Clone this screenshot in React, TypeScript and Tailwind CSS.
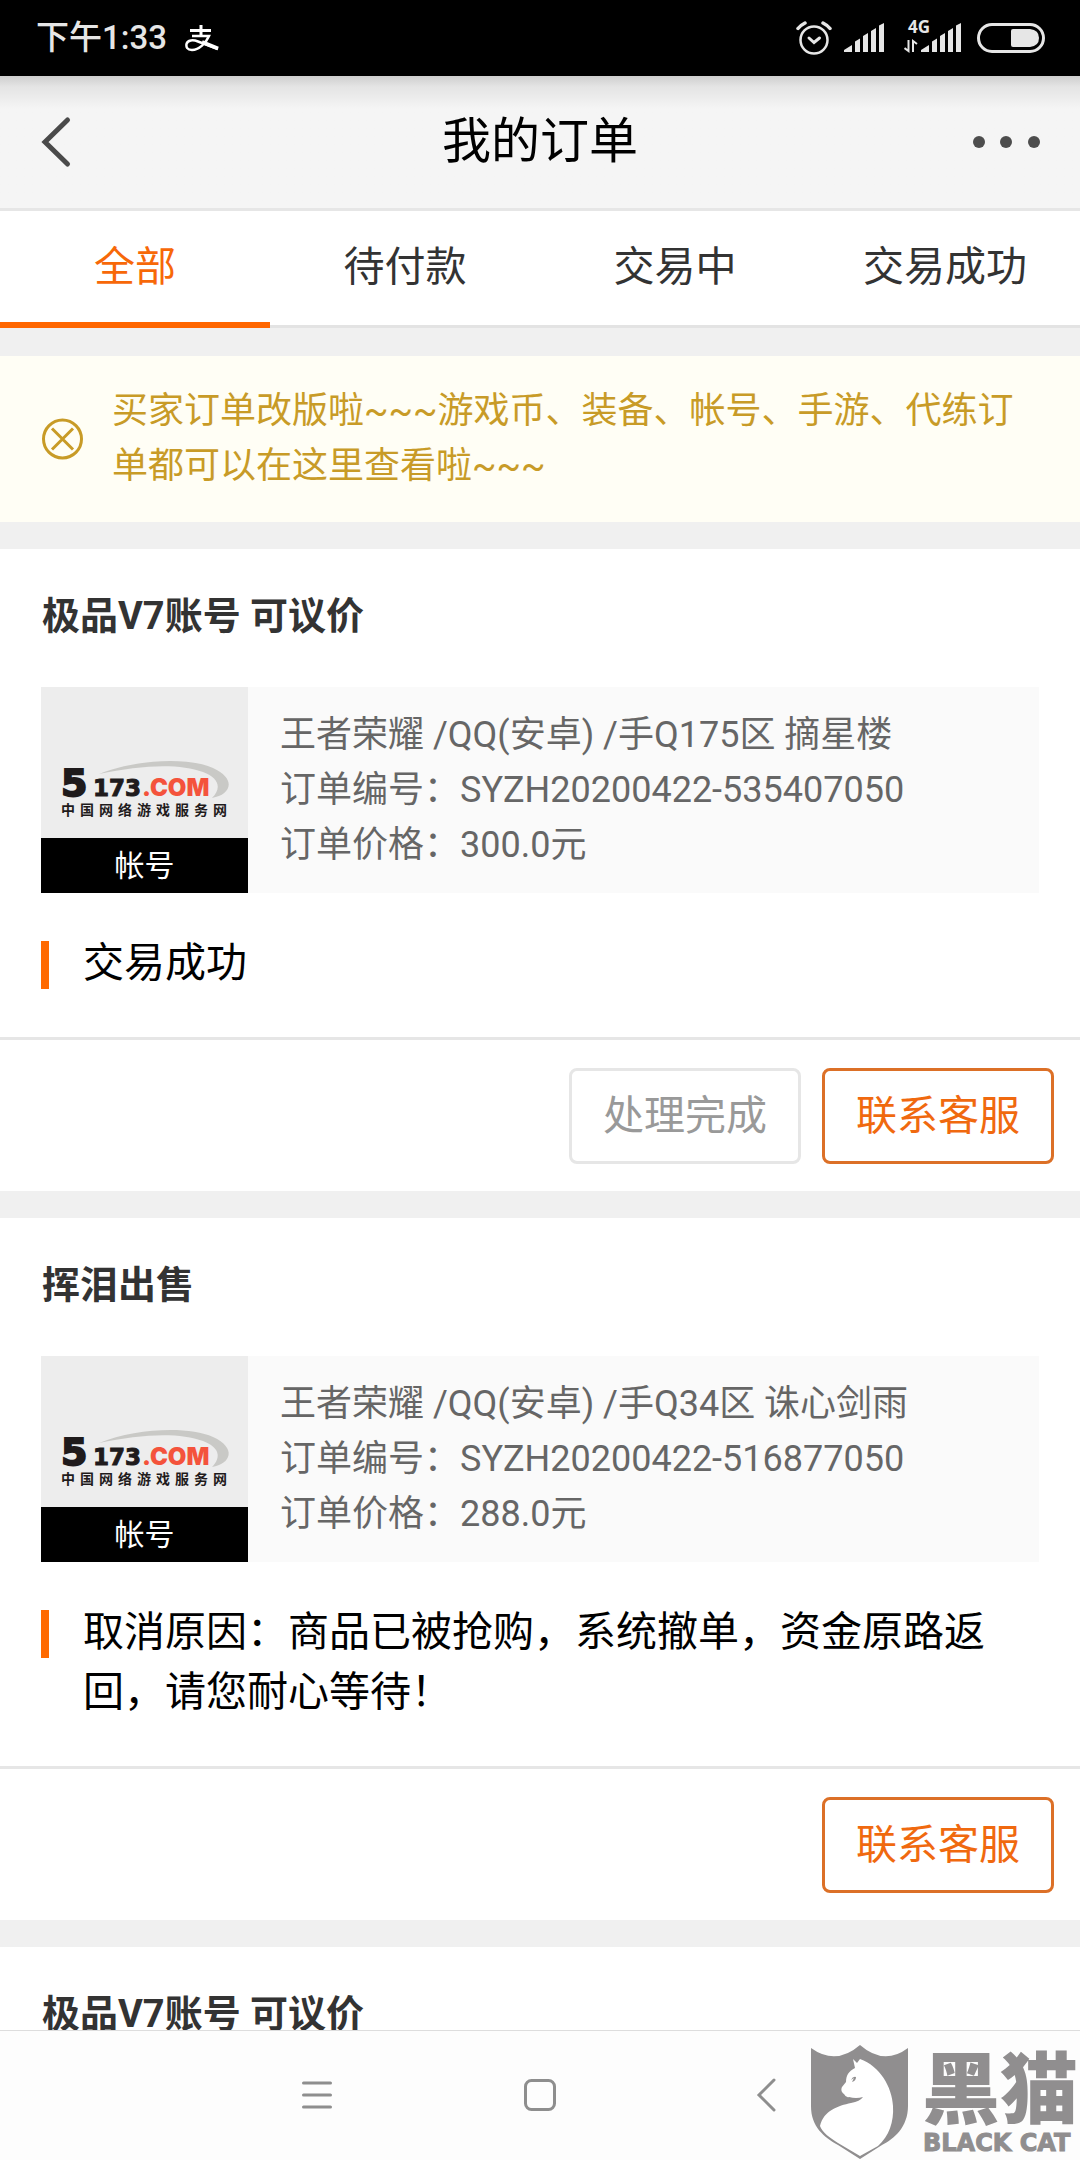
import { useState } from "react";

interface Order {
  id: string;
  title: string;
  area?: string;
  orderNo?: string;
  price?: string;
  status?: string;
  finished?: boolean;
}

const TABS = ["全部", "待付款", "交易中", "交易成功"];

const ORDERS: Order[] = [
  {
    id: "535407050",
    title: "极品V7账号 可议价",
    area: "王者荣耀 /QQ(安卓) /手Q175区 摘星楼",
    orderNo: "SYZH20200422-535407050",
    price: "300.0元",
    status: "交易成功",
    finished: true,
  },
  {
    id: "516877050",
    title: "挥泪出售",
    area: "王者荣耀 /QQ(安卓) /手Q34区 诛心剑雨",
    orderNo: "SYZH20200422-516877050",
    price: "288.0元",
    status: "取消原因：商品已被抢购，系统撤单，资金原路返回，请您耐心等待！",
  },
  { id: "next", title: "极品V7账号 可议价" },
];

// ── Status bar ───────────────────────────────────────────────────────────────

function SignalBars() {
  return (
    <path
      d="M0 32V30L8 25V32ZM11 32V21.500L16 18.500V32ZM19 32V16L24 13V32ZM27 32V11L32 8V32ZM35 32V5.500L40 3V32Z"
      fill="#e6e6e6"
    />
  );
}

function StatusBar() {
  return (
    <div className="flex h-[76px] shrink-0 items-center bg-black pr-[35px] pl-9 text-[#e6e6e6]">
      <span className="text-[33px] leading-10 font-medium">下午1:33</span>
      <svg className="ml-[18px]" width="34" height="28" viewBox="0 0 34 28" fill="none" stroke="#fff">
        <path d="M5 6.500H26M16 1V12" strokeWidth="3" />
        <path d="M7 12H24C21 19 14 26 7 26C2 26 1 23 1.500 20C2.500 16 8 15.500 13 17.500L33 25" strokeWidth="2.500" />
        <path d="M17 18L33 24.500" strokeWidth="4" />
      </svg>
      <div className="ml-auto flex items-center">
        <svg width="36" height="36" viewBox="0 0 36 36" fill="none" stroke="#e6e6e6" strokeWidth="2.500" strokeLinecap="round">
          <circle cx="18" cy="20" r="13.500" />
          <path d="M13 18L18 22.500L23.500 18" strokeWidth="3" />
          <path d="M2 8.500C4 6 6 4.500 9 3M27 3C30 4.500 32 6 34 8.500" strokeWidth="3.500" />
        </svg>
        <svg className="ml-3" width="40" height="36" viewBox="0 0 40 36">
          <SignalBars />
        </svg>
        <svg className="ml-5" width="57" height="52" viewBox="0 -8 57 52">
          <text x="4" y="13" fontSize="17" fontWeight="700" fill="#e6e6e6" fontFamily="Noto Sans">
            4G
          </text>
          <path d="M4.500 20V31L0.500 28M9 32V21L13 24" fill="none" stroke="#e6e6e6" strokeWidth="2" />
          <g transform="translate(17 0)">
            <SignalBars />
          </g>
        </svg>
        <svg className="ml-4" width="68" height="36" viewBox="0 0 68 36">
          <rect x="1.500" y="4.500" width="65" height="27" rx="13.500" fill="none" stroke="#e6e6e6" strokeWidth="3" />
          <path d="M34 11Q34 9 36 9H53Q62 10 62 18Q62 26 53 27H36Q34 27 34 25Z" fill="#e6e6e6" />
        </svg>
      </div>
    </div>
  );
}

// ── Page header and tabs ─────────────────────────────────────────────────────

function Header() {
  return (
    <header className="grid h-[135px] shrink-0 grid-cols-3 items-center border-b-[3px] border-[#e6e6e6] bg-[#f5f5f5] bg-linear-to-b from-[#cecece] via-[#e4e4e4] via-8% to-[#f5f5f5] to-25% px-10">
      <button type="button" aria-label="返回" className="justify-self-start">
        <svg width="32" height="52" viewBox="0 0 32 52" fill="none" stroke="#4a4a4a" strokeWidth="5" strokeLinecap="round">
          <path d="M27.500 4L5 26L27.500 48" />
        </svg>
      </button>
      <h1 className="text-center text-[49px] leading-[60px] text-black">我的订单</h1>
      <button type="button" aria-label="更多" className="justify-self-end">
        <svg width="68" height="52" viewBox="0 0 68 52" fill="#4d4d4d">
          <circle cx="7" cy="26" r="6" />
          <circle cx="34" cy="26" r="6" />
          <circle cx="62" cy="26" r="6" />
        </svg>
      </button>
    </header>
  );
}

function Tabs() {
  const [active, setActive] = useState(TABS[0]);

  return (
    <nav className="grid grid-cols-4 bg-white">
      {TABS.map((tab) => (
        <button
          key={tab}
          type="button"
          onClick={() => setActive(tab)}
          className={`h-[117px] text-[41px] leading-[60px] ${
            tab === active
              ? "border-b-[6px] border-[#ff6600] text-[#f76808]"
              : "border-b-[3px] border-[#e3e3e3] pb-[3px] text-[#333]"
          }`}
        >
          {tab}
        </button>
      ))}
    </nav>
  );
}

function Notice() {
  return (
    <div className="mt-7 flex items-center bg-[#fffef5] py-7 pr-10 pl-[41px] text-[#c89b27]">
      <svg className="shrink-0" width="43" height="43" viewBox="0 0 43 43" fill="none" stroke="currentColor" strokeWidth="3">
        <circle cx="21.500" cy="21" r="19" />
        <path d="M11 10.500L32 31.500M32 10.500L11 31.500" />
      </svg>
      <p className="ml-7 text-[36px] leading-[55px]">
        买家订单改版啦~~~游戏币、装备、帐号、手游、代练订单都可以在这里查看啦~~~
      </p>
    </div>
  );
}

// ── Orders ───────────────────────────────────────────────────────────────────

function Thumbnail() {
  return (
    <div className="w-[207px] shrink-0 bg-[#ededed]">
      <svg width="207" height="151" viewBox="0 0 207 151" fontFamily="DejaVu Sans" fontWeight="700">
        <path
          d="M58 87C95 72 148 70 172 81C196 92 190 108 171 111C181 101 178 91 162 85C138 76 100 78 58 87Z"
          fill="#c9c9c6"
        />
        <text x="20" y="109" fontSize="38" fill="#1f1b1c" stroke="#1f1b1c" strokeWidth="2">5</text>
        <text x="52" y="109" fontSize="23" fill="#1f1b1c" stroke="#1f1b1c" strokeWidth="1">173</text>
        <text x="101" y="109" fontSize="24" fontWeight="900" fontFamily="Inter" fill="#f4533c">.COM</text>
        <text
          x="20 39 58 77 96 115 134 153 172"
          y="128"
          fontSize="14"
          fontFamily="Noto Sans CJK SC"
          fill="#1f1b1c"
        >
          中国网络游戏服务网
        </text>
      </svg>
      <div className="bg-black text-center text-[30px] leading-[55px] text-white">帐号</div>
    </div>
  );
}

function OrderCard({ order }: { order: Order }) {
  return (
    <section className="mt-[27px] bg-white">
      <h2 className="px-[42px] pt-10 text-[38px] leading-[55px] font-bold text-[#333]">
        {order.title}
      </h2>
      {order.orderNo && (
        <>
          <div className="mx-[41px] mt-[43px] flex bg-[#fafafa]">
            <Thumbnail />
            <div className="self-center pl-8 text-[36px] leading-[55px] text-[#666]">
              <p>{order.area}</p>
              <p>订单编号：{order.orderNo}</p>
              <p>订单价格：{order.price}</p>
            </div>
          </div>
          <div className="flex items-start px-[41px] pt-10 pb-11">
            <span className="mt-2 h-12 w-2 shrink-0 bg-[#ff6a00]" />
            <p className="ml-[34px] text-[41px] leading-[60px] text-black">{order.status}</p>
          </div>
          {/* Actions */}
          <div className="flex justify-end gap-[21px] border-t-[3px] border-[#e6e6e6] pt-7 pr-[26px] pb-[27px]">
            {order.finished && (
              <button
                type="button"
                className="h-24 w-[232px] rounded-lg border-[3px] border-[#e6e6e6] text-[41px] leading-[60px] text-[#999]"
              >
                处理完成
              </button>
            )}
            <button
              type="button"
              className="h-24 w-[232px] rounded-lg border-[3px] border-[#dc7027] text-[41px] leading-[60px] text-[#f0690f]"
            >
              联系客服
            </button>
          </div>
        </>
      )}
    </section>
  );
}

// ── System navigation ────────────────────────────────────────────────────────

function BlackCat() {
  return (
    <svg className="absolute right-0 bottom-0" width="270" height="136" viewBox="0 -20 270 136" fill="#908e8f">
      <path d="M1 4Q26 22 50 1Q74 22 98 4V62C98 83 84 95 72 101L50 115L28 101C14 93 1 83 1 62Z" />
      <path
        d="M43 15L47 19L50 15C70 22 82 43 83 62C84 78 79 92 68 102L50 112L28 99C20 94 12 88 10 82C14 66 28 62 41 59C47 58 51 56 53 53Q46 55 39 53Q36 54 34 50C31 48 31 45 32 43L36 38C36 31 39 27 45 24Z"
        fill="#fff"
      />
      <path d="M41 36Q43 32 46 33Q46 37 42 38L44 34Z" />
      <text x="112" y="74" fontSize="78" fontWeight="900" fontFamily="Noto Sans CJK SC">
        黑猫
      </text>
      <text x="113" y="107" fontSize="24" fontWeight="700" fontFamily="DejaVu Sans" stroke="#908e8f">
        BLACK CAT
      </text>
    </svg>
  );
}

function SystemNav() {
  return (
    <footer className="relative flex h-[130px] shrink-0 items-center justify-center border-t border-[#ddd] bg-[#fdfdfd]">
      <button type="button" aria-label="最近任务" className="flex w-56 justify-center">
        <svg width="32" height="36" viewBox="0 0 32 36" stroke="#8e8e8e" strokeWidth="3" strokeLinecap="round">
          <path d="M3.500 5H30.500M3.500 17H30.500M3.500 29H30.500" />
        </svg>
      </button>
      <button type="button" aria-label="主页" className="flex w-56 justify-center">
        <svg width="36" height="36" viewBox="0 0 36 36" fill="none" stroke="#8e8e8e" strokeWidth="3">
          <rect x="3.500" y="2.500" width="29" height="29" rx="6" />
        </svg>
      </button>
      <button type="button" aria-label="后退" className="flex w-56 justify-center">
        <svg width="24" height="36" viewBox="0 0 24 36" fill="none" stroke="#8e8e8e" strokeWidth="3" strokeLinecap="round">
          <path d="M22 2L7 17L22 32" />
        </svg>
      </button>
      <BlackCat />
    </footer>
  );
}

export default function App() {
  return (
    <div className="flex h-screen flex-col bg-[#f0f0f0] font-[Roboto,'Noto_Sans_CJK_SC',sans-serif]">
      <StatusBar />
      <Header />
      <main className="min-h-0 flex-1 overflow-y-auto [scrollbar-width:none]">
        <Tabs />
        <Notice />
        {ORDERS.map((order) => (
          <OrderCard key={order.id} order={order} />
        ))}
      </main>
      <SystemNav />
    </div>
  );
}
